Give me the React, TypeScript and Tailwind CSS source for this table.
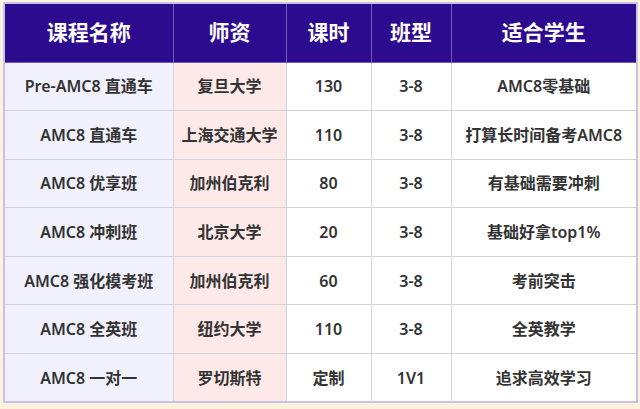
const rows = [
  ["Pre-AMC8 直通车", "复旦大学", "130", "3-8", "AMC8零基础"],
  ["AMC8 直通车", "上海交通大学", "110", "3-8", "打算长时间备考AMC8"],
  ["AMC8 优享班", "加州伯克利", "80", "3-8", "有基础需要冲刺"],
  ["AMC8 冲刺班", "北京大学", "20", "3-8", "基础好拿top1%"],
  ["AMC8 强化模考班", "加州伯克利", "60", "3-8", "考前突击"],
  ["AMC8 全英班", "纽约大学", "110", "3-8", "全英教学"],
  ["AMC8 一对一", "罗切斯特", "定制", "1V1", "追求高效学习"],
];

const heads = ["课程名称", "师资", "课时", "班型", "适合学生"];
const widths = ["w-[169px]", "w-[113px]", "w-[85px]", "w-[80px]", "w-[186px]"];
const cellBg = ["bg-[#f1f0fd]", "bg-[#fde9e8]", "bg-white", "bg-white", "bg-white"];

export default function App() {
  return (
    <div
      className="h-[409px] w-[640px] bg-[#fdf1e0] pl-[3px] pt-[2px]"
      style={{ fontFamily: '"Noto Sans", "Noto Sans CJK SC", sans-serif' }}
    >
      <table className="w-[634px] table-fixed border-collapse border-2 border-[#c9c3e6]">
        <thead>
          <tr className="h-[59px] bg-[#2d0b8f]">
            {heads.map((h, i) => (
              <th
                key={h}
                className={`${widths[i]} border border-[#6f5cb8] text-[21px] font-bold text-white`}
              >
                {h}
              </th>
            ))}
          </tr>
        </thead>
        <tbody>
          {rows.map((r) => (
            <tr key={r[0]} className="h-[48.6px]">
              {r.map((c, i) => (
                <td
                  key={i}
                  className={`${cellBg[i]} border border-[#d3d3da] text-center text-[16px] font-semibold text-[#333]`}
                >
                  {c}
                </td>
              ))}
            </tr>
          ))}
        </tbody>
      </table>
    </div>
  );
}
